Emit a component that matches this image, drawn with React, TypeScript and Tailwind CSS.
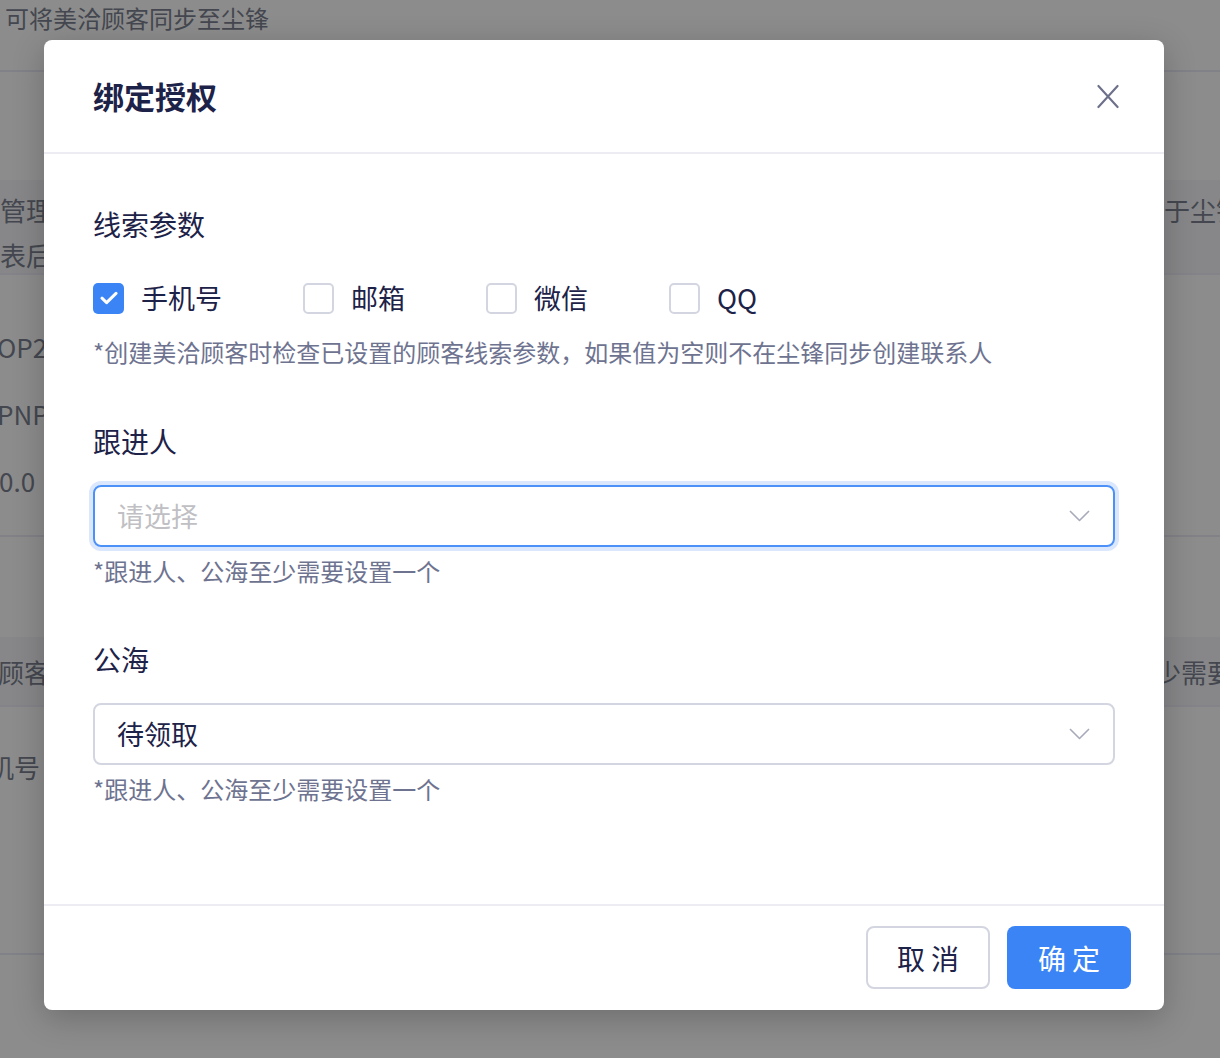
import React, { useState } from 'react';

const FONT = { fontFamily: '"Noto Sans CJK SC", "Noto Sans", sans-serif' };

const OPTIONS = [
  { key: 'phone', label: '手机号' },
  { key: 'email', label: '邮箱' },
  { key: 'wechat', label: '微信' },
  { key: 'qq', label: 'QQ' },
];

const Chevron = () => (
  <svg width="21" height="12" viewBox="0 0 21 12" fill="none">
    <path d="M1 1L10.5 10.5L20 1" stroke="#a7aaba" strokeWidth="1.6" strokeLinejoin="round" />
  </svg>
);

const Background = () => (
  <div className="absolute inset-0 overflow-hidden bg-[#8c8c8c] text-[#44474f]">
    <div className="h-[72px] border-b-2 border-[#818188] pl-[5px] pt-[1px] text-[24px] leading-[34px]">
      可将美洽顾客同步至尘锋
    </div>
    <div className="h-[108px]" />
    <div className="flex h-[95px] justify-between border-b-2 border-[#838389] bg-[#878789] text-[26px]">
      <div className="pt-[7px] leading-[45px]">
        <div>管理顾客</div>
        <div>表后顾客</div>
      </div>
      <div className="w-[56px] overflow-hidden whitespace-nowrap pt-[7px] leading-[45px]">于尘锋</div>
    </div>
    <div className="flex h-[262px] flex-col border-b-2 border-[#818188] pt-[38px] text-[26px] leading-[67px]">
      <div className="-ml-[3px]">OP2</div>
      <div className="-ml-[3px]">PNP</div>
      <div className="-ml-[1px]">0.0</div>
    </div>
    <div className="h-[100px]" />
    <div className="flex h-[70px] items-center justify-between border-b-2 border-[#838389] bg-[#878789] text-[26px]">
      <div className="-ml-[2px]">顾客</div>
      <div className="w-[65px] overflow-hidden whitespace-nowrap">少需要</div>
    </div>
    <div className="h-[246px] pt-[40px] text-[26px] leading-[40px]">
      <div className="-ml-[12px]">机号</div>
    </div>
    <div className="border-t-2 border-[#818188]" />
  </div>
);

const Checkbox = ({ checked, label, onToggle }: { checked: boolean; label: string; onToggle: () => void }) => (
  <button onClick={onToggle} className="mr-[81px] flex items-center gap-[17px]">
    {checked ? (
      <span className="flex h-[31px] w-[31px] items-center justify-center rounded-[5px] bg-[#3b84f6]">
        <svg width="18" height="14" viewBox="0 0 18 14" fill="none">
          <path d="M2 7.2L6.6 11.6L16 2.4" stroke="white" strokeWidth="3" strokeLinecap="round" strokeLinejoin="round" />
        </svg>
      </span>
    ) : (
      <span className="h-[31px] w-[31px] rounded-[5px] border-2 border-[#d3d6e0] bg-white" />
    )}
    <span className="text-[27px] leading-[40px] text-[#1d2248]">{label}</span>
  </button>
);

export default function App() {
  const [checked, setChecked] = useState<Record<string, boolean>>({ phone: true, email: false, wechat: false, qq: false });

  return (
    <div className="relative h-[1058px] w-[1220px] overflow-hidden" style={FONT}>
      <Background />

      <div className="absolute left-[44px] top-[40px] w-[1120px] rounded-[8px] bg-white shadow-[0_8px_32px_rgba(0,0,0,0.22)]">
        <div className="flex h-[114px] items-center justify-between border-b-2 border-[#ececf2] pl-[49px] pr-[45px]">
          <h2 className="text-[31px] font-bold leading-[40px] text-[#1d2248]">绑定授权</h2>
          <button className="flex h-[24px] w-[22px] items-center justify-center">
            <svg width="23" height="25" viewBox="0 0 23 25" fill="none">
              <path d="M1.5 1.5L21.5 23.5M21.5 1.5L1.5 23.5" stroke="#6c7089" strokeWidth="2.2" strokeLinecap="round" />
            </svg>
          </button>
        </div>

        <div className="px-[49px] pb-[98px] pt-[50px]">
          <div className="text-[28px] leading-[40px] text-[#1d2248]">线索参数</div>
          <div className="mt-[34px] flex h-[40px] items-center">
            {OPTIONS.map((o) => (
              <Checkbox
                key={o.key}
                label={o.label}
                checked={checked[o.key]}
                onToggle={() => setChecked((p) => ({ ...p, [o.key]: !p[o.key] }))}
              />
            ))}
          </div>
          <div className="mt-[17px] text-[24px] leading-[34px] text-[#6e7390]">
            *创建美洽顾客时检查已设置的顾客线索参数，如果值为空则不在尘锋同步创建联系人
          </div>

          <div className="mt-[52px] text-[28px] leading-[40px] text-[#1d2248]">跟进人</div>
          <div className="mt-[24px] flex h-[62px] items-center justify-between rounded-[8px] border-2 border-[#4b91f7] pl-[22px] pr-[23px] ring-4 ring-[#dbe7fd]">
            <span className="text-[27px] text-[#bfbfc4]">请选择</span>
            <Chevron />
          </div>
          <div className="mt-[7px] text-[24px] leading-[34px] text-[#6e7390]">*跟进人、公海至少需要设置一个</div>

          <div className="mt-[51px] text-[28px] leading-[40px] text-[#1d2248]">公海</div>
          <div className="mt-[24px] flex h-[62px] items-center justify-between rounded-[8px] border-2 border-[#d3d6e0] pl-[22px] pr-[23px]">
            <span className="text-[27px] text-[#1d2248]">待领取</span>
            <Chevron />
          </div>
          <div className="mt-[7px] text-[24px] leading-[34px] text-[#6e7390]">*跟进人、公海至少需要设置一个</div>
        </div>

        <div className="flex justify-end gap-[17px] border-t-2 border-[#ececf2] pb-[21px] pr-[33px] pt-[20px]">
          <button className="flex h-[63px] w-[124px] items-center justify-center rounded-[8px] border-2 border-[#d3d6e0] bg-white pl-[6px] text-[28px] tracking-[6px] text-[#1d2248]">
            取消
          </button>
          <button className="flex h-[63px] w-[124px] items-center justify-center rounded-[8px] bg-[#3b84f6] pl-[6px] text-[28px] tracking-[6px] text-white">
            确定
          </button>
        </div>
      </div>
    </div>
  );
}
